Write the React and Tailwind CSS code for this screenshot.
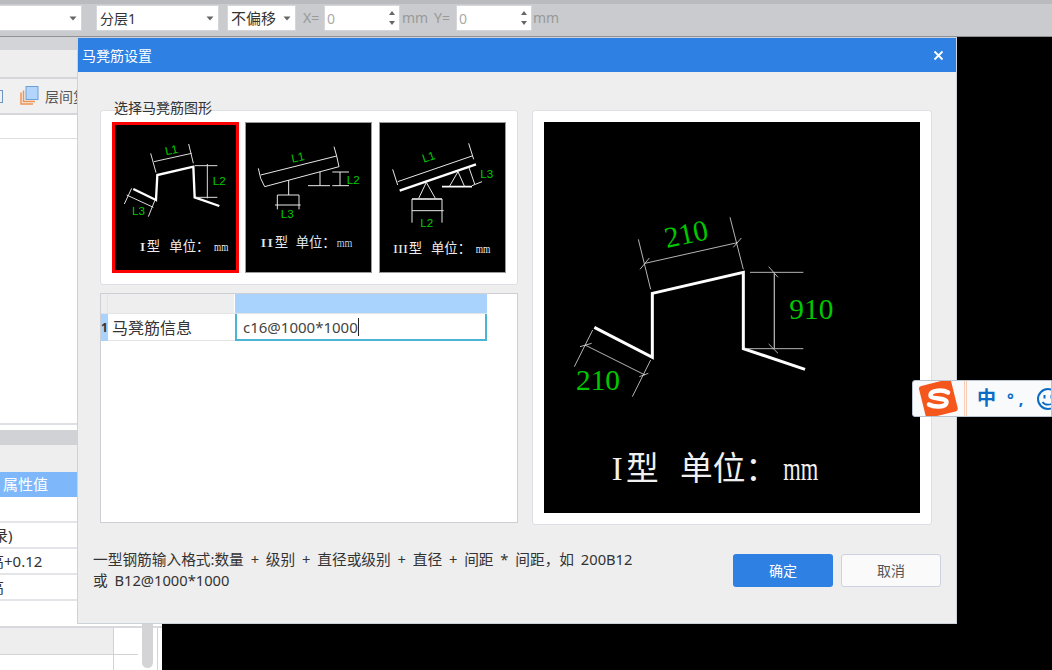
import React from 'react';

const serif = "font-['Liberation_Serif','Noto_Sans_CJK_SC',serif]";
const sans = "font-['Liberation_Sans',sans-serif]";

const Caret = () => (
  <svg width="8" height="5" viewBox="0 0 8 5" className="shrink-0">
    <path d="M0.5 0.5h7L4 4.5z" fill="#666" />
  </svg>
);

const Select = ({ className, children }) => (
  <div className={`h-[26px] bg-white border border-[#d4d6d9] flex items-center justify-between pl-[3px] pr-[4px] text-[#333] ${className}`}>
    <span>{children}</span>
    <Caret />
  </div>
);

const Spin = ({ className }) => (
  <div className={`h-[26px] bg-white border border-[#d4d6d9] flex items-center justify-between pl-[2px] pr-[3px] text-[14px] text-[#aaa] ${className}`}>
    <span>0</span>
    <svg width="8" height="18" viewBox="0 0 8 18">
      <path d="M4 2L7 6H1z M1 12h6L4 16z" fill="#666" />
    </svg>
  </div>
);

const TypeOne = () => (
  <svg viewBox="6 6 381 453" className="block w-full h-full">
    <g fill="none" stroke="#fff">
      <path d="M70 207L138 240L142 165L250 140L254 232L328 258" strokeWidth="7" />
      <g strokeWidth="3" stroke="#ddd">
        <path d="M132 125L245 100M122 100L138 158M236 72L250 130" />
        <path d="M255 137H322M258 232H322M292 132V235" />
        <path d="M50 225L130 262M65 205L43 252M135 240L115 290" />
      </g>
    </g>
    <g fill="#00c800" fontSize="35" className={sans}>
      <text x="168" y="106" transform="rotate(-12 168 106)">L1</text>
      <text x="308" y="196">L2</text>
      <text x="66" y="284">L3</text>
    </g>
    <text x="88" y="392" fontSize="40" textLength="20" lengthAdjust="spacingAndGlyphs" fill="#eee" className={serif}>I</text>
    <text fill="#eee" fontSize="40" y="394" className={serif}>
      <tspan x="110">型</tspan>
      <tspan x="178">单位：</tspan>
    </text>
    <text x="312" y="392" fontSize="40" textLength="43" lengthAdjust="spacingAndGlyphs" fill="#eee" className={serif}>mm</text>
  </svg>
);

const TypeTwo = () => (
  <svg viewBox="3 6 381 453" className="block w-full h-full">
    <g fill="none" stroke="#e8e8e8" strokeWidth="3">
      <path d="M43 145L50 175L62 200L285 140L278 108L270 80M50 165L278 108" />
      <path d="M134 180V225M100 225H165M228 155V197M192 197H258" />
      <path d="M265 156H315M265 197H315M288 156V197" />
      <path d="M100 225V268M165 225V268M93 255H170" />
    </g>
    <g fill="#00c800" fontSize="35" className={sans}>
      <text x="145" y="128" transform="rotate(-12 145 128)">L1</text>
      <text x="308" y="192">L2</text>
      <text x="110" y="293">L3</text>
    </g>
    <text x="48" y="380" fontSize="40" textLength="41" lengthAdjust="spacingAndGlyphs" fill="#dfe8f2" className={serif}>II</text>
    <text fill="#dfe8f2" fontSize="40" y="381" className={serif}>
      <tspan x="92">型</tspan>
      <tspan x="155">单位：</tspan>
    </text>
    <text x="278" y="380" fontSize="40" textLength="47" lengthAdjust="spacingAndGlyphs" fill="#b9cde0" className={serif}>mm</text>
  </svg>
);

const TypeThree = () => (
  <svg viewBox="6 6 381 453" className="block w-full h-full">
    <g fill="none" stroke="#fff">
      <path d="M68 212L297 133" strokeWidth="7" />
      <path d="M105 237H195M195 200H285" strokeWidth="5" />
      <g strokeWidth="3" stroke="#e8e8e8">
        <path d="M62 185L288 107M47 148L62 195M275 70L290 118" />
        <path d="M125 235L148 187L175 235M218 198L243 155L262 198" />
        <path d="M105 237V308M195 237V308M105 272H200" />
        <path d="M275 140L293 192M285 197L315 185" />
      </g>
    </g>
    <g fill="#00c800" fontSize="35" className={sans}>
      <text x="140" y="128" transform="rotate(-18 140 128)">L1</text>
      <text x="130" y="320">L2</text>
      <text x="310" y="174">L3</text>
    </g>
    <text x="48" y="398" fontSize="40" textLength="45" lengthAdjust="spacingAndGlyphs" fill="#eee" className={serif}>III</text>
    <text fill="#eee" fontSize="40" y="400" className={serif}>
      <tspan x="95">型</tspan>
      <tspan x="162">单位：</tspan>
    </text>
    <text x="296" y="398" fontSize="40" textLength="44" lengthAdjust="spacingAndGlyphs" fill="#eee" className={serif}>mm</text>
  </svg>
);

const Preview = () => (
  <svg viewBox="42 36 1128 1173" className="block w-full h-full">
    <path d="M193 652L367 742L367 550L640 487L640 716L825 778" fill="none" stroke="#fff" strokeWidth="9" />
    <g fill="none" stroke="#d8d8d8" strokeWidth="2.5">
      <path d="M345 460L622 398M325 388L362 538M600 322L640 478M330 478L358 444M610 412L634 384" />
      <path d="M660 487H820M645 716H820M716 470L744 502M716 702L744 730" />
      <path d="M165 705L345 795M188 660L133 770M362 750L307 860M150 710L185 700M328 800L355 790" />
    </g>
    <path d="M733 487V716" stroke="#aaa" strokeWidth="4" />
    <g fill="#00c800" fontSize="88" className={serif}>
      <text x="410" y="414" transform="rotate(-12 410 414)">210</text>
      <text x="778" y="626">910</text>
      <text x="138" y="841">210</text>
    </g>
    <text fill="#f0f0f0" fontSize="98" y="1110" className={serif}>
      <tspan x="245">I</tspan>
      <tspan x="288">型</tspan>
      <tspan x="450">单位：</tspan>
    </text>
    <text x="760" y="1110" fontSize="98" textLength="105" lengthAdjust="spacingAndGlyphs" fill="#f0f0f0" className={serif}>mm</text>
  </svg>
);

const Thumb = ({ selected, children }) => (
  <div className={`w-[127px] h-[151px] bg-black ${selected ? 'shadow-[inset_0_0_0_3px_#f00]' : 'shadow-[inset_0_0_0_1px_#999]'}`}>
    {children}
  </div>
);

const Dialog = () => (
  <div className="absolute left-[78px] top-[38px] w-[878px] h-[585px] bg-[#eeeeee] ring-1 ring-[#cdd2da] flex flex-col">
    <div className="h-[34px] shrink-0 bg-[#2e80e2] flex items-center justify-between pl-[4px] pr-[12px] text-white text-[14px]">
      <span>马凳筋设置</span>
      <svg width="11" height="11" viewBox="0 0 11 11">
        <path d="M1.5 1.5L9.5 9.5M9.5 1.5L1.5 9.5" stroke="#fff" strokeWidth="1.8" />
      </svg>
    </div>
    <div className="flex pl-[22px] pt-[38px] gap-[14px]">
      <div className="w-[418px] flex flex-col gap-[8px]">
        <div className="relative h-[175px] bg-white border border-[#dcdfe4] rounded-[3px] pl-[11px] pt-[11px] flex">
          <span className="absolute left-[13px] -top-[14px] text-[14px] text-[#333]">选择马凳筋图形</span>
          <div className="flex">
            <Thumb selected><TypeOne /></Thumb>
            <div className="w-[6px]" />
            <Thumb><TypeTwo /></Thumb>
            <div className="w-[7px]" />
            <Thumb><TypeThree /></Thumb>
          </div>
        </div>
        <div className="h-[230px] bg-white border border-[#ccd0d6]">
          <div className="flex h-[20px] w-[386px] border-b border-[#e2e4e8]">
            <div className="w-[7px] bg-[#eeeeee] border-r border-[#e2e4e8]" />
            <div className="w-[126px] bg-[#eeeeee]" />
            <div className="w-[252px] bg-[#a9d3fd] ml-[1px]" />
          </div>
          <div className="flex h-[27px] w-[386px]">
            <div className="w-[7px] bg-[#a9d3fd] flex items-center justify-center text-[12px] font-bold text-[#333]">1</div>
            <div className="w-[127px] pl-[4px] pt-px flex items-center text-[16px] text-[#333] border-b border-[#e2e4e8]">马凳筋信息</div>
            <div className="w-[252px] border-x-2 border-b-2 border-[#4db3d4] pl-[6px] flex items-center text-[15px] text-[#444]">
              <span className="border-r border-[#222] leading-[18px]">c16@1000*1000</span>
            </div>
          </div>
        </div>
      </div>
      <div className="w-[400px] h-[415px] bg-white border border-[#dcdfe4] rounded-[3px] p-[11px]">
        <div className="w-[376px] h-[391px] bg-black">
          <Preview />
        </div>
      </div>
    </div>
    <div className="flex justify-between px-[15px] pt-[24px]">
      <p className="text-[14.7px] leading-[21px] text-[#333] whitespace-nowrap [word-spacing:3px]">
        一型钢筋输入格式:数量 + 级别 + 直径或级别 + 直径 + 间距 * 间距，如 200B12
        <br />
        或 B12@1000*1000
      </p>
      <div className="flex gap-[8px] mt-[5px]">
        <button className="w-[100px] h-[33px] rounded-[3px] bg-[#2e80e2] text-white text-[14px]">确定</button>
        <button className="w-[100px] h-[33px] rounded-[3px] bg-[#fafafa] border border-[#ccd3e0] text-[#555] text-[14px]">取消</button>
      </div>
    </div>
  </div>
);

const ImeBar = () => (
  <div className="absolute left-[912px] top-[380px] w-[140px] h-[37px] bg-[#f8fafc] border border-[#b9c4d0] rounded-l-[3px] flex items-center overflow-hidden">
    <svg width="40" height="40" viewBox="0 0 40 40" className="shrink-0 ml-[6px]">
      <rect x="3" y="3" width="33" height="33" rx="3" fill="#f4561c" transform="rotate(-14 20 20)" />
      <path d="M29 13.5C24 10.5 12 11 11.5 16C11 21 28 18 27.5 23.5C27 28.5 15 28.5 10 25.5" fill="none" stroke="#fff" strokeWidth="4.5" strokeLinecap="round" />
    </svg>
    <div className="w-[3px] h-full border-x border-[#f8cdb8] ml-[5px] shrink-0" />
    <span className="ml-[10px] text-[19px] font-bold text-[#0a6cc4] leading-none">中</span>
    <span className="ml-[11px] text-[16px] font-bold text-[#0a6cc4] leading-none tracking-[5px]">°,</span>
    <svg width="24" height="24" viewBox="0 0 24 24" className="shrink-0 ml-[8px]">
      <circle cx="12" cy="12" r="10" fill="none" stroke="#0a6cc4" strokeWidth="2" />
      <path d="M8.5 8v3.5M15.5 8v3.5" stroke="#0a6cc4" strokeWidth="2" />
      <path d="M6.5 15C8.5 18.5 15.5 18.5 17.5 15" fill="none" stroke="#0a6cc4" strokeWidth="1.8" />
    </svg>
  </div>
);

const PropRow = ({ children }) => (
  <div className="h-[26px] shrink-0 border-b-2 border-[#e4e5e8] bg-white flex items-center text-[15px] text-[#333] whitespace-nowrap">
    {children}
  </div>
);

const LeftPanel = () => (
  <div className="w-[162px] shrink-0 bg-white flex flex-col overflow-hidden">
    <div className="h-[13px] shrink-0 bg-[#d3d4d8]" />
    <div className="h-[27px] shrink-0 bg-[#eeeeee]" />
    <div className="h-[38px] shrink-0 bg-[#f0f0f0] border-y-2 border-[#d4d6da] flex items-center text-[14px] text-[#555]">
      <div className="w-[3px] h-[13px] border-r border-y border-[#6c94c4] mr-[17px]" />
      <svg width="19" height="20" viewBox="0 0 19 20" className="shrink-0 mr-[6px]">
        <path d="M1 6.5V18H13M3.5 4.5V15.5H15" fill="none" stroke="#f0934f" strokeWidth="1.5" />
        <rect x="6" y="0.5" width="12" height="13" fill="#b4d5fb" stroke="#6d9fd8" />
      </svg>
      <span className="whitespace-nowrap">层间复制</span>
    </div>
    <div className="h-[24px] shrink-0 border-b border-[#dfe0e3]" />
    <div className="h-[286px] shrink-0 border-b-2 border-[#dfe0e3]" />
    <div className="h-[5px] shrink-0" />
    <div className="h-[15px] shrink-0 bg-[#d0d2d6]" />
    <div className="h-[27px] shrink-0 bg-[#eeeeee]" />
    <div className="h-[25px] shrink-0 bg-[#7eb8fb] text-white text-[15px] flex items-center pl-[3px]">属性值</div>
    <PropRow />
    <PropRow><span className="-ml-[7px]">录)</span></PropRow>
    <PropRow><span className="-ml-[11px]">高+0.12</span></PropRow>
    <PropRow><span className="-ml-[11px]">高</span></PropRow>
    <div className="h-[27px] shrink-0 border-b-2 border-[#d8d9dc]" />
    <div className="flex h-[42px] shrink-0">
      <div className="w-[114px] h-full border-r border-[#d0d2d6]">
        <div className="h-[27px] bg-[#eeeeee] border-b border-[#d0d2d6]" />
      </div>
      <div className="w-[24px] h-[27px] border-b border-[#d0d2d6]" />
      <div className="w-[4px]" />
      <div className="w-[11px] h-[67px] -mt-[27px] bg-[#d4d4d6] rounded-b-[6px]" />
      <div className="w-[4px]" />
      <div className="w-[1px] bg-[#d0d2d6]" />
    </div>
  </div>
);

export default function App() {
  return (
    <div className="relative w-[1052px] h-[670px] overflow-hidden bg-black font-['Noto_Sans','Noto_Sans_CJK_SC',sans-serif]">
      <div className="h-[37px] bg-[#c9cbce] border-t-[4px] border-[#b9bbbe] border-b border-b-[#8f9194] flex items-start pt-[1px] text-[14px] text-[#999]">
        <Select className="w-[83px] -ml-px" />
        <Select className="w-[123px] ml-[14px]">分层1</Select>
        <Select className="w-[69px] ml-[8px] text-[15px]">不偏移</Select>
        <span className="w-[21px] ml-[7px] leading-[26px]">X=</span>
        <Spin className="w-[76px]" />
        <span className="w-[26px] ml-[2px] leading-[26px]">mm</span>
        <span className="w-[22px] ml-[6px] leading-[26px]">Y=</span>
        <Spin className="w-[76px]" />
        <span className="ml-[1px] leading-[26px]">mm</span>
      </div>
      <div className="flex">
        <LeftPanel />
      </div>
      <Dialog />
      <ImeBar />
    </div>
  );
}
